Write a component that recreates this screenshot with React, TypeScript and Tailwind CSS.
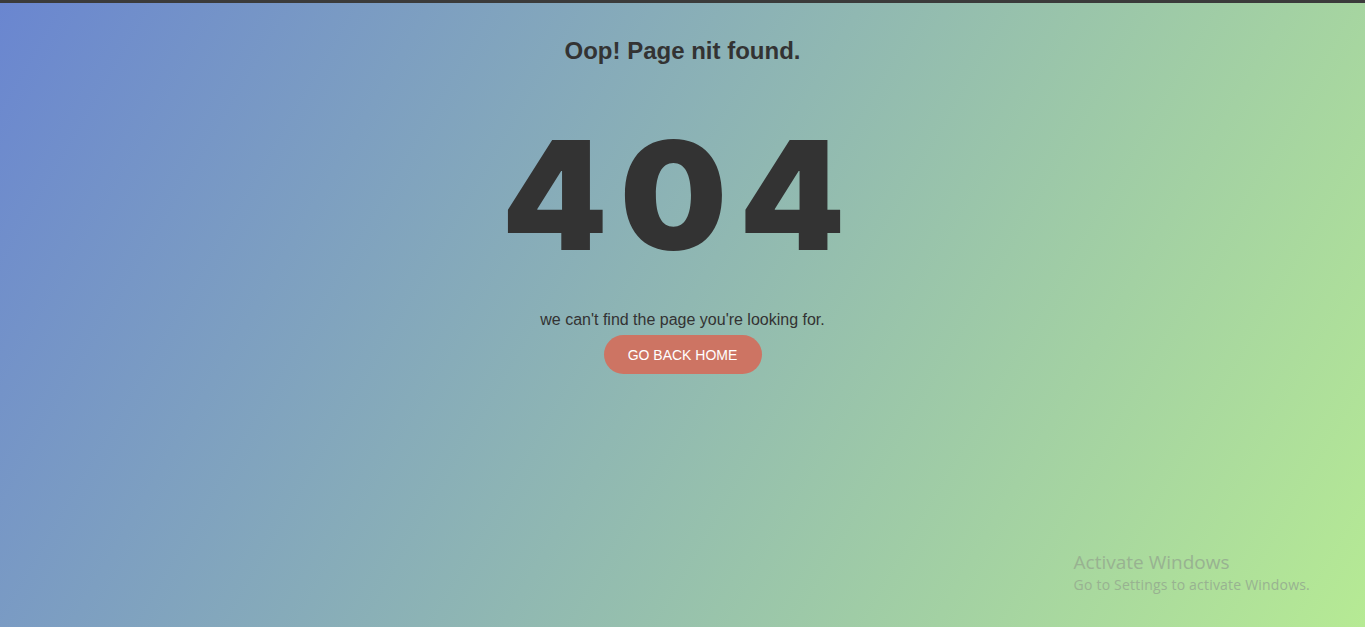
export default function App() {
  return (
    <div className="flex min-h-[627px] w-full flex-col border-t-[3px] border-[#3b3b3b] bg-[linear-gradient(120deg,#6a86d0_0%,#b6ea94_100%)] font-['Liberation_Sans',Arial,sans-serif] text-[#333333]">
      <main className="flex flex-col items-center">
        <h1 className="mt-[32px] text-[24px] leading-[32px] font-bold">Oop! Page nit found.</h1>
        <div className="mt-[53px] mr-[6px] font-['Inter',sans-serif] text-[151px] leading-[151px] font-black tracking-[12px]">
          404
        </div>
        <p className="mt-[37px] text-[16px] leading-[24px]">we can't find the page you're looking for.</p>
        <button className="mt-[3px] h-[39px] w-[158px] rounded-full bg-[#cd7463] pt-px text-[14px] text-white">
          GO BACK HOME
        </button>
      </main>
      <div className="flex-1" />
      <footer className="flex justify-end pr-[55px] pb-[32px]">
        <div className="font-['Open_Sans','Noto_Sans',sans-serif] text-[#98b291]">
          <div className="text-[19px] leading-[26px]">Activate Windows</div>
          <div className="text-[14px] leading-[20px] tracking-[0.2px]">Go to Settings to activate Windows.</div>
        </div>
      </footer>
    </div>
  );
}
